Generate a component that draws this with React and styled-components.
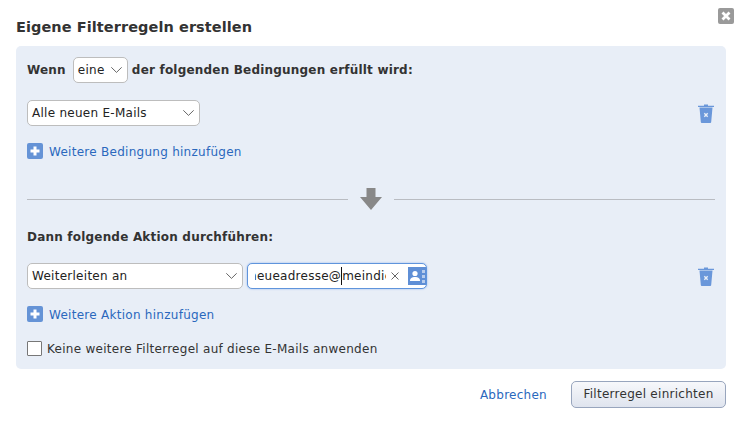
import React from "react";
import styled, { createGlobalStyle } from "styled-components";

const Global = createGlobalStyle`
  html, body { margin: 0; padding: 0; background: #fff; }
  body { font-family: "DejaVu Sans", Verdana, sans-serif; font-size: 12px; color: #333; letter-spacing: 0.27px; }
`;

const Dialog = styled.div`
  position: relative;
  width: 738px;
  height: 421px;
  box-sizing: border-box;
  padding: 0 12px 0 16px;
  overflow: hidden;
`;
const Title = styled.h1`
  margin: 0;
  height: 46px;
  box-sizing: border-box;
  padding-top: 18px;
  font-size: 14.5px;
  line-height: 18px;
  font-weight: 700;
  letter-spacing: 0.07px;
  color: #333;
`;
const CloseIcon = styled.svg`
  position: absolute;
  top: 8px;
  left: 718px;
`;
const Panel = styled.div`
  height: 323px;
  box-sizing: border-box;
  background: #e8eef7;
  border-radius: 5px;
  padding: 11px 11px 0;
`;
const Row = styled.div`
  display: flex;
  align-items: center;
  height: 26px;
  margin-bottom: ${(p) => p.$mb || 0}px;
`;
const Heading = styled.span`
  font-weight: 700;
  color: #333;
  font-size: 12px;
  letter-spacing: 0.2px;
`;
const SelectBox = styled.div`
  display: flex;
  align-items: center;
  justify-content: space-between;
  box-sizing: border-box;
  width: ${(p) => p.$w}px;
  height: 26px;
  margin: ${(p) => p.$margin || 0};
  padding: 0 5px 0 4px;
  background: #fff;
  border: 1px solid #bdbdbd;
  border-radius: 5px;
  color: #222;
  font-size: 12px;
`;
const Trash = styled.svg`
  margin-left: auto;
  margin-right: 1px;
  flex: none;
`;
const AddRow = styled.div`
  display: flex;
  align-items: center;
  gap: 6px;
  height: 16px;
  margin-bottom: ${(p) => p.$mb || 0}px;
`;
const LinkText = styled.a`
  color: #2a68bd;
  font-size: 12px;
  line-height: 16px;
  padding-top: 1px;
  text-decoration: none;
`;
const Separator = styled.div`
  display: flex;
  align-items: center;
  height: 22px;
  gap: 12px;
  margin-bottom: 14px;
`;
const Line = styled.div`
  flex: 1;
  height: 1px;
  background: #b9bcc2;
`;
const Recipient = styled.div`
  display: flex;
  align-items: center;
  box-sizing: border-box;
  width: 180px;
  height: 26px;
  margin-left: 4px;
  padding-left: 7px;
  background: #fff;
  border: 1px solid #5f94dc;
  border-radius: 5px;
  box-shadow: 0 0 2px #8fb4ea;
`;
const RecipientText = styled.div`
  width: 131px;
  overflow: hidden;
  white-space: nowrap;
  color: #222;
  font-size: 12px;
  line-height: 20px;
  display: flex;
  align-items: center;
`;
const ScrolledStart = styled.span`
  margin-left: -6px;
  flex: none;
`;
const ScrolledEnd = styled.span`
  flex: none;
`;
const Caret = styled.span`
  flex: none;
  width: 1px;
  height: 18px;
  background: #111;
`;
const Clear = styled.svg`
  margin-left: 5px;
  flex: none;
`;
const Contact = styled.svg`
  margin-left: 9px;
  flex: none;
`;
const CheckRow = styled.label`
  display: flex;
  align-items: center;
  height: 15px;
  gap: 5px;
  color: #333;
  font-size: 12px;
`;
const Check = styled.span`
  width: 15px;
  height: 15px;
  box-sizing: border-box;
  background: #fff;
  border: 1px solid #777;
  border-radius: 1px;
  flex: none;
`;
const Footer = styled.div`
  display: flex;
  align-items: center;
  justify-content: flex-end;
  height: 27px;
  margin-top: 12px;
  gap: 24px;
`;
const Primary = styled.button`
  width: 155px;
  height: 27px;
  padding: 0 0 1px;
  font: 12px "DejaVu Sans", Verdana, sans-serif;
  letter-spacing: 0.27px;
  color: #333;
  border: 1px solid #98a5bd;
  border-radius: 5px;
  background: linear-gradient(#f7f8fb, #dfe4ee);
`;

const Chevron = () => (
  <svg width="11" height="6" viewBox="0 0 11 6" fill="none" stroke="#555" strokeWidth="0.9">
    <path d="M0.3 0.3 L5.5 5.4 L10.7 0.3" />
  </svg>
);
const TrashIcon = () => (
  <Trash width="16" height="19" viewBox="0 0 16 19">
    <path d="M6 0.5h4v1.2h6v1.4H0V1.7h6z" fill="#6a97da" />
    <path d="M1.5 3.6h13L13.2 18a1 1 0 0 1-1 1H3.8a1 1 0 0 1-1-1z" fill="#6a97da" />
    <path d="M6.3 9.3l3.4 3.4M9.7 9.3l-3.4 3.4" stroke="#e8eef7" strokeWidth="1.4" />
  </Trash>
);
const PlusIcon = () => (
  <svg width="16" height="16" viewBox="0 0 16 16">
    <rect width="16" height="16" rx="2" fill="#6593d6" />
    <path d="M8 3.5v9M3.5 8h9" stroke="#fff" strokeWidth="3" />
  </svg>
);

export default function App() {
  return (
    <Dialog>
      <Global />
      <Title>Eigene Filterregeln erstellen</Title>
      <CloseIcon width="16" height="16" viewBox="0 0 16 16">
        <rect width="16" height="16" rx="2" fill="#9a9a9a" />
        <path d="M4.5 4.5l7 7M11.5 4.5l-7 7" stroke="#fff" strokeWidth="2.8" />
      </CloseIcon>
      <Panel>
        <Row $mb={17}>
          <Heading>Wenn</Heading>
          <SelectBox $w={55} $margin="0 4px 0 7px">
            eine
            <Chevron />
          </SelectBox>
          <Heading>der folgenden Bedingungen erfüllt wird:</Heading>
        </Row>
        <Row $mb={17}>
          <SelectBox $w={173}>
            Alle neuen E-Mails
            <Chevron />
          </SelectBox>
          <TrashIcon />
        </Row>
        <AddRow $mb={29}>
          <PlusIcon />
          <LinkText>Weitere Bedingung hinzufügen</LinkText>
        </AddRow>
        <Separator>
          <Line />
          <svg width="22" height="22" viewBox="0 0 22 22">
            <path d="M6.5 0h9v9H22L11 22 0 9h6.5z" fill="#888" />
          </svg>
          <Line />
        </Separator>
        <Row $mb={13}>
          <Heading>Dann folgende Aktion durchführen:</Heading>
        </Row>
        <Row $mb={17}>
          <SelectBox $w={216}>
            Weiterleiten an
            <Chevron />
          </SelectBox>
          <Recipient>
            <RecipientText>
              <ScrolledStart>neueadresse@</ScrolledStart>
              <Caret />
              <ScrolledEnd>meindienst.de</ScrolledEnd>
            </RecipientText>
            <Clear width="8" height="8" viewBox="0 0 8 8" stroke="#666" strokeWidth="1">
              <path d="M0.5 0.5l7 7M7.5 0.5l-7 7" />
            </Clear>
            <Contact width="18" height="18" viewBox="0 0 18 18">
              <rect width="18" height="18" fill="#5f8fd6" />
              <circle cx="7" cy="6.5" r="2.6" fill="#fff" />
              <path d="M2 14c0-3 2-4 5-4s5 1 5 4z" fill="#fff" />
              <rect x="14" y="3" width="3" height="3" fill="#b9cdec" />
              <rect x="14" y="8" width="3" height="3" fill="#b9cdec" />
              <rect x="14" y="13" width="3" height="3" fill="#b9cdec" />
            </Contact>
          </Recipient>
          <TrashIcon />
        </Row>
        <AddRow $mb={19}>
          <PlusIcon />
          <LinkText>Weitere Aktion hinzufügen</LinkText>
        </AddRow>
        <CheckRow>
          <Check />
          Keine weitere Filterregel auf diese E-Mails anwenden
        </CheckRow>
      </Panel>
      <Footer>
        <LinkText>Abbrechen</LinkText>
        <Primary>Filterregel einrichten</Primary>
      </Footer>
    </Dialog>
  );
}
